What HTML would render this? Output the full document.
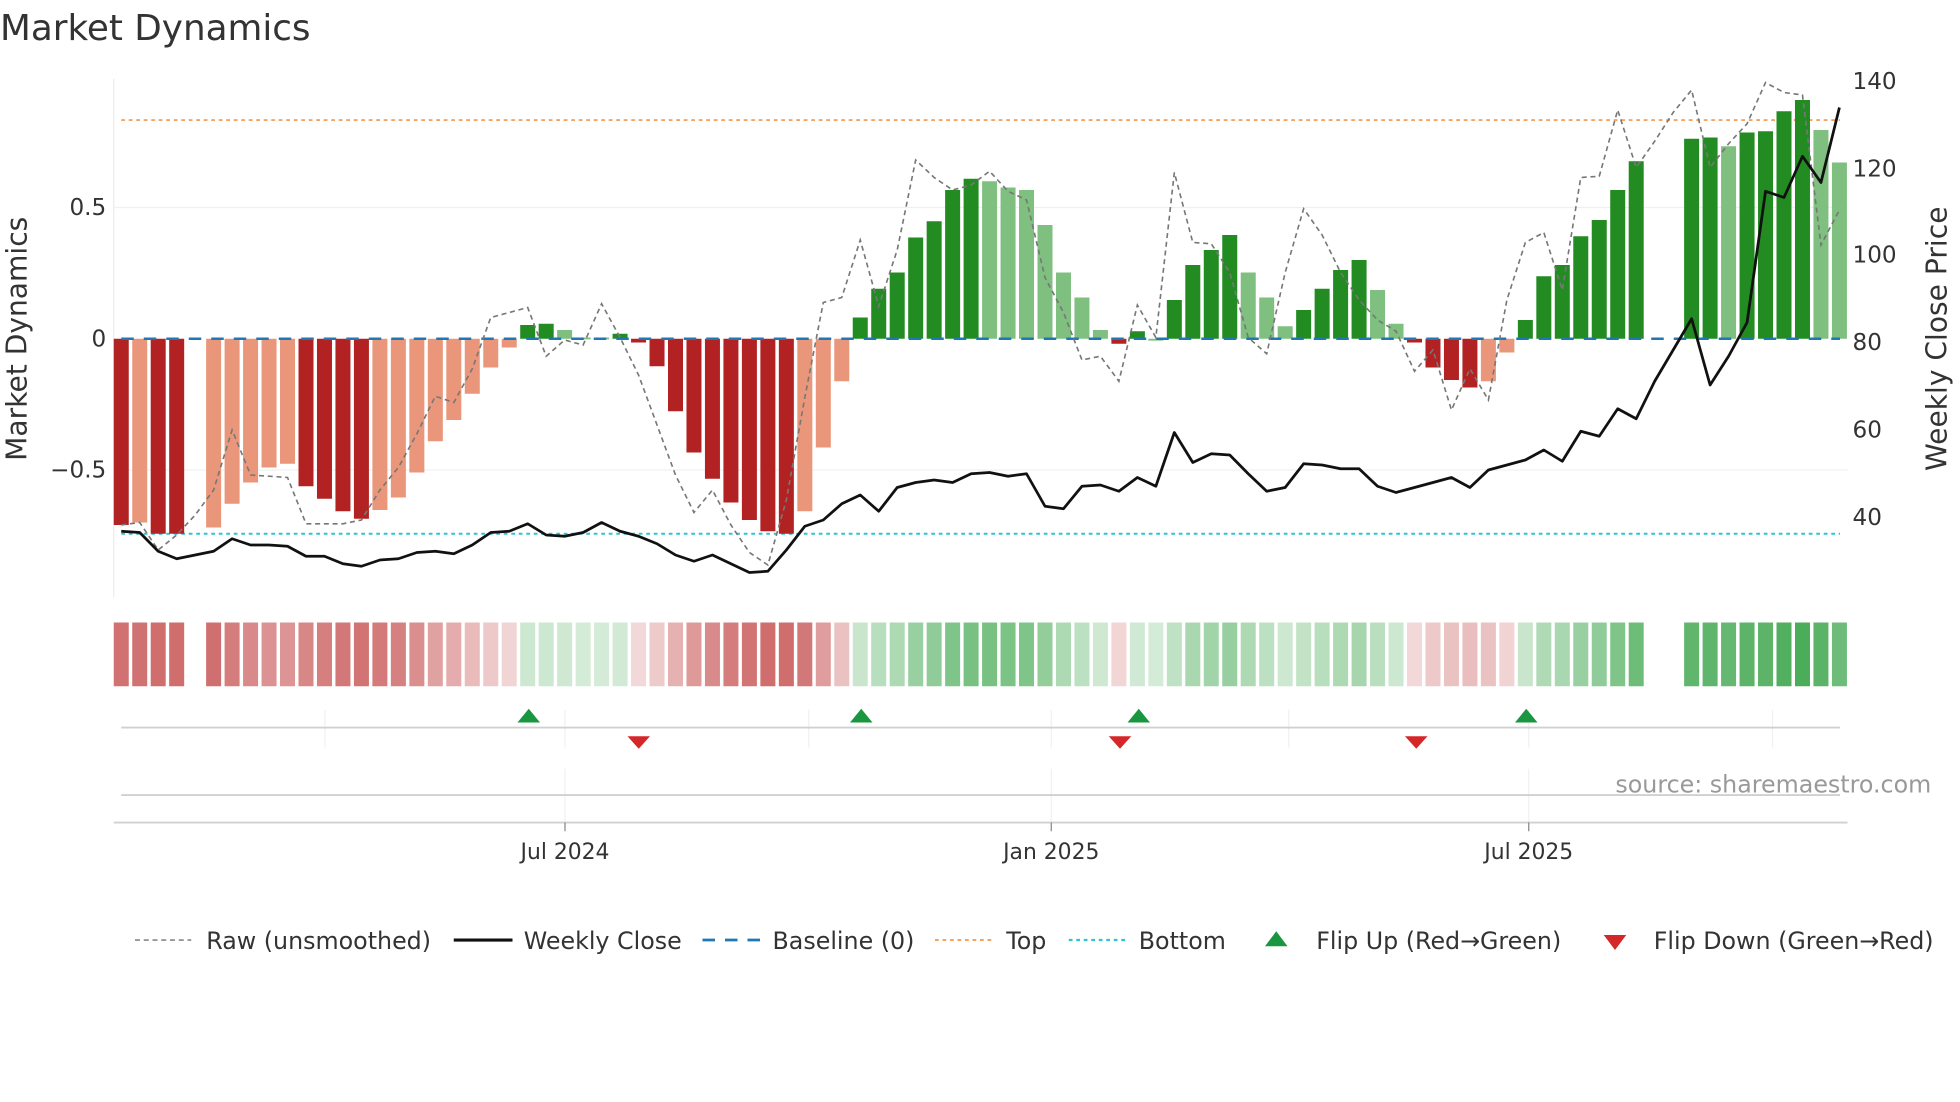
<!DOCTYPE html>
<html><head><meta charset="utf-8"><style>
html,body{margin:0;padding:0;background:#fff;width:1960px;height:1102px;overflow:hidden}
svg{display:block}
text{font-family:"DejaVu Sans","Liberation Sans",sans-serif}
</style></head><body>
<svg id="s" width="1960" height="1102" viewBox="0 0 1568 881.6" xmlns="http://www.w3.org/2000/svg">
<rect width="1568" height="882" fill="#fff"/>
<text x="0" y="32" font-size="28.6" fill="#333">Market Dynamics</text>
<g id="grid"></g>
<g id="bars"></g>
<g id="lines"></g>
<g id="strip"></g>
<g id="ax" font-size="17" fill="#333"></g>
</svg>
<script>
const NS="http://www.w3.org/2000/svg";
function el(p,t,a,txt){const e=document.createElementNS(NS,t);for(const k in a)e.setAttribute(k,a[k]);if(txt!=null)e.textContent=txt;document.getElementById(p).appendChild(e);return e;}
const X=i=>97+i*14.78;
const B=[[420,'D'],[418,'L'],[427,'D'],[427,'D'],null,[422,'L'],[403,'L'],[386,'L'],[374,'L'],[371,'L'],
[389,'D'],[399,'D'],[409,'D'],[415,'D'],[408,'L'],[398,'L'],[378,'L'],[353,'L'],[336,'L'],[315,'L'],
[294,'L'],[278,'L'],[260,'G'],[259,'G'],[264,'g'],[270,'g'],[270,'g'],[267,'G'],[274,'D'],[293,'D'],
[329,'D'],[362,'D'],[383,'D'],[402,'D'],[416,'D'],[425,'D'],[427,'D'],[409,'L'],[358,'L'],[305,'L'],
[254,'G'],[231,'G'],[218,'G'],[190,'G'],[177,'G'],[152,'G'],[143,'G'],[145,'g'],[150,'g'],[152,'g'],
[180,'g'],[218,'g'],[238,'g'],[264,'g'],[275,'D'],[265,'G'],[271,'g'],[240,'G'],[212,'G'],[200,'G'],
[188,'G'],[218,'g'],[238,'g'],[261,'g'],[248,'G'],[231,'G'],[216,'G'],[208,'G'],[232,'g'],[259,'g'],
[274,'D'],[294,'D'],[304,'D'],[310,'D'],[305,'L'],[282,'L'],[256,'G'],[221,'G'],[212,'G'],[189,'G'],
[176,'G'],[152,'G'],[129,'G'],null,null,[111,'G'],[110,'G'],[117,'g'],[106,'G'],[105,'G'],
[89,'G'],[80,'G'],[104,'g'],[130,'g']];
const C=[425,426,441,447,444,441,431,436,436,437,445,445,451,453,448,447,442,441,443,436,426,425,419,428,429,426,418,425,429,435,444,449,444,451,458,457,440,421,416,403,396,409,390,386,384,386,379,378,381,379,405,407,389,388,393,382,389,346,370,363,364,379,393,390,371,372,375,375,389,394,390,386,382,390,376,372,368,360,369,345,349,327,335,305,280,255,308,285,258,153,158,125,146,86];
const R=[420,418,440,428,412,392,344,380,381,382,419,419,419,416,392,374,347,317,322,295,254,250,246,285,272,276,243,270,300,340,380,410,392,420,442,452,400,318,242,238,192,245,200,128,142,152,148,137,153,160,222,250,288,285,305,244,270,138,194,195,218,270,283,218,167,188,218,240,256,265,297,280,328,295,320,240,194,186,232,142,141,88,134,113,90,72,134,115,99,66,74,76,196,168];
const col={D:'#b22222',L:'#e9967a',G:'#228b22',g:'#7fbf7f'};
el('grid','line',{x1:91,y1:63,x2:91,y2:478,stroke:'#ebebeb','stroke-width':1});
[166,376].forEach(y=>el('grid','line',{x1:91,y1:y,x2:1478,y2:y,stroke:'#eef0f4','stroke-width':1}));
[452,841,1223].forEach(x=>el('grid','line',{x1:x,y1:615,x2:x,y2:658,stroke:'#eef0f4','stroke-width':1}));
[260,452,647,841,1031,1223,1418].forEach(x=>el('grid','line',{x1:x,y1:568,x2:x,y2:598,stroke:'#eef0f4','stroke-width':1}));
el('grid','line',{x1:97,y1:96,x2:1472,y2:96,stroke:'#f4a460','stroke-width':1.5,'stroke-dasharray':'3 3'});
el('grid','line',{x1:97,y1:427,x2:1472,y2:427,stroke:'#2ec4d6','stroke-width':1.6,'stroke-dasharray':'3 3'});
B.forEach((b,i)=>{if(!b)return;const x=X(i)-6,y0=271;const y=Math.min(b[0],y0),h=Math.max(Math.abs(b[0]-y0),1.5);
el('bars','rect',{x:x,y:y,width:12,height:h,fill:col[b[1]]});
const v=Math.abs(b[0]-271)/210;const red=(b[1]=='D'||b[1]=='L');
let a;
if(red){a=0.2+0.6*Math.min(v/0.75,1);el('strip','rect',{x:x,y:498,width:12,height:51,fill:`rgba(195,70,70,${a.toFixed(2)})`});}
else{a=0.22+0.7*Math.min(v/0.9,1);el('strip','rect',{x:x,y:498,width:12,height:51,fill:`rgba(60,165,75,${a.toFixed(2)})`});}
});
el('lines','line',{x1:97,y1:271,x2:1472,y2:271,stroke:'#1f77b4','stroke-width':2,'stroke-dasharray':'10 8'});
el('lines','polyline',{points:R.map((y,i)=>X(i)+','+y).join(' '),fill:'none',stroke:'#777','stroke-width':1.3,'stroke-dasharray':'4 3'});
el('lines','polyline',{points:C.map((y,i)=>X(i)+','+y).join(' '),fill:'none',stroke:'#111','stroke-width':2.2,'stroke-linejoin':'round'});
el('lines','line',{x1:97,y1:582,x2:1472,y2:582,stroke:'#d0d0d0','stroke-width':1.5});
el('lines','line',{x1:97,y1:636,x2:1472,y2:636,stroke:'#d0d0d0','stroke-width':1.5});
el('lines','line',{x1:91,y1:658,x2:1478,y2:658,stroke:'#d0d0d0','stroke-width':1.5});
[423,689,911,1221].forEach(x=>el('lines','path',{d:`M${x-9} 578L${x} 567L${x+9} 578Z`,fill:'#1a9641'}));
[511,896,1133].forEach(x=>el('lines','path',{d:`M${x-9} 589L${x} 599L${x+9} 589Z`,fill:'#d62728'}));
[[452,'Jul 2024'],[841,'Jan 2025'],[1223,'Jul 2025']].forEach(t=>{el('ax','line',{x1:t[0],y1:658,x2:t[0],y2:665,stroke:'#888'});el('ax','text',{x:t[0],y:687,'text-anchor':'middle','font-size':17.5},t[1]);});
[[166,'0.5'],[271,'0'],[376,'\u22120.5']].forEach(t=>el('ax','text',{x:85,y:t[0]+6,'text-anchor':'end','font-size':18.5},t[1]));
[[65,'140'],[135,'120'],[204,'100'],[274,'80'],[344,'60'],[414,'40']].forEach(t=>el('ax','text',{x:1482,y:t[0]+6,'font-size':18.5},t[1]));
el('ax','text',{x:0,y:0,'font-size':22.5,'text-anchor':'middle',transform:'translate(21,271) rotate(-90)'},'Market Dynamics');
el('ax','text',{x:0,y:0,'font-size':22.5,'text-anchor':'middle',transform:'translate(1557,271) rotate(-90)'},'Weekly Close Price');
el('ax','text',{x:1545,y:634,'text-anchor':'end','font-size':19,fill:'#999'},'source: sharemaestro.com');
const L=(x1,x2,st,w,da)=>el('ax','line',{x1:x1,y1:752,x2:x2,y2:752,stroke:st,'stroke-width':w,'stroke-dasharray':da||'none'});
L(108,153,'#888',1.3,'4 3');el('ax','text',{x:165,y:759,'font-size':19},'Raw (unsmoothed)');
L(363,410,'#111',2.5);el('ax','text',{x:419,y:759,'font-size':19},'Weekly Close');
L(562,608,'#1f77b4',2.2,'10 8');el('ax','text',{x:618,y:759,'font-size':19},'Baseline (0)');
L(748,794,'#f4a460',1.6,'3 3');el('ax','text',{x:805,y:759,'font-size':19},'Top');
L(855,901,'#2ec4d6',1.8,'3 3');el('ax','text',{x:911,y:759,'font-size':19},'Bottom');
el('ax','path',{d:'M1012 757L1021 745L1030 757Z',fill:'#1a9641'});el('ax','text',{x:1053,y:759,'font-size':19},'Flip Up (Red\u2192Green)');
el('ax','path',{d:'M1283 748L1292 760L1301 748Z',fill:'#d62728'});el('ax','text',{x:1323,y:759,'font-size':19},'Flip Down (Green\u2192Red)');
</script>
</body></html>
